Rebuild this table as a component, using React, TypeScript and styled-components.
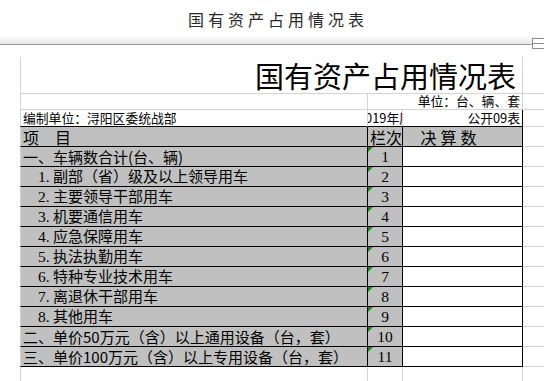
import React from 'react';
import styled, { createGlobalStyle } from 'styled-components';

const GRID = '#d4d4d4';
const INK = '#000';
const SHADE = '#c0c0c0';
const CJK = '"Noto Sans CJK SC", "Noto Sans", sans-serif';

const GlobalStyle = createGlobalStyle`
  html, body {
    margin: 0;
    padding: 0;
    background: #fff;
  }
  body {
    width: 544px;
    height: 381px;
    overflow: hidden;
    font-family: ${CJK};
    color: #000;
  }
`;

const Page = styled.div`
  width: 544px;
  height: 381px;
  overflow: hidden;
`;

const TopBar = styled.header`
  height: 36px;
  display: flex;
  align-items: center;
  justify-content: center;
  padding-left: 12px;
  padding-top: 2px;
  box-sizing: border-box;
`;

const DocTitle = styled.h1`
  margin: 0;
  font-size: 16px;
  font-weight: 400;
  line-height: 1;
  letter-spacing: 4px;
  color: #2a2a2a;
`;

const Divider = styled.div`
  position: relative;
  height: 8px;
  background: linear-gradient(#fcfcfc, #e6e6e6);
  border-bottom: 1px solid #9c9c9c;
`;

const SplitIcon = styled.span`
  position: absolute;
  right: -2px;
  top: 2px;
  width: 12px;
  height: 9px;
  border: 1px solid #8e8e8e;
  background: linear-gradient(#fff 0 4px, #8e8e8e 4px 5px, #fff 5px);
`;

const Sheet = styled.div`
  margin-top: 12px;
  padding-left: 20px;
`;

const Row = styled.div<{ $h: number }>`
  display: flex;
  height: ${(p) => p.$h}px;
`;

type Line = 'ink' | 'grid' | 'none';
const lineColor = (l: Line) => (l === 'ink' ? INK : l === 'grid' ? GRID : 'transparent');

const Cell = styled.div<{
  $w: number;
  $bg?: string;
  $right?: Line;
  $bottom?: Line;
  $left?: boolean;
  $clip?: boolean;
  $align?: 'left' | 'center' | 'right';
  $valign?: 'center' | 'flex-end';
}>`
  position: relative;
  box-sizing: border-box;
  flex: 0 0 ${(p) => p.$w}px;
  width: ${(p) => p.$w}px;
  height: 100%;
  overflow: ${(p) => (p.$clip ? 'hidden' : 'visible')};
  white-space: nowrap;
  display: flex;
  align-items: ${(p) => p.$valign || 'center'};
  justify-content: ${(p) =>
    p.$align === 'right' ? 'flex-end' : p.$align === 'center' ? 'center' : 'flex-start'};
  background: ${(p) => p.$bg || '#fff'};
  border-right: 1px solid ${(p) => lineColor(p.$right || 'none')};
  border-bottom: 1px solid ${(p) => lineColor(p.$bottom || 'none')};
  border-left: ${(p) => (p.$left ? `1px solid ${GRID}` : 'none')};
  line-height: 1;
`;

const Flag = styled.span`
  position: absolute;
  left: 0;
  top: 0;
  width: 0;
  height: 0;
  border-top: 5px solid #1a8a1a;
  border-right: 5px solid transparent;
`;

const BigTitle = styled.span`
  font-size: 29px;
  padding-right: 6px;
`;

const Small = styled.span<{ $pad?: number }>`
  font-size: 12.8px;
  padding-right: ${(p) => p.$pad ?? 0}px;
  padding-left: 2px;
  padding-bottom: 1px;
`;

const Clipped = styled.span`
  font-size: 12.8px;
  flex: 0 0 auto;
  padding-bottom: 1px;
`;

const Label = styled.span<{ $indent?: boolean }>`
  font-size: 15px;
  padding-left: ${(p) => (p.$indent ? 17 : 2)}px;
`;

const Prefix = styled.span`
  display: inline-block;
  width: 15px;
  font-family: "Liberation Serif", ${CJK};
  font-size: 15.5px;
`;

const HeadText = styled.span<{ $shift?: number; $spread?: number }>`
  font-size: 16px;
  padding-right: ${(p) => p.$shift ?? 0}px;
  padding-left: 2px;
  letter-spacing: ${(p) => p.$spread ?? 0}px;
`;

const Num = styled.span`
  font-family: "Liberation Serif", ${CJK};
  font-size: 15.5px;
`;

const W1 = 348;
const W2 = 35;
const W3 = 120;
const W4 = 40;

const items: { label: string; no?: string }[] = [
  { label: '一、车辆数合计(台、辆)' },
  { no: '1.', label: '副部（省）级及以上领导用车' },
  { no: '2.', label: '主要领导干部用车' },
  { no: '3.', label: '机要通信用车' },
  { no: '4.', label: '应急保障用车' },
  { no: '5.', label: '执法执勤用车' },
  { no: '6.', label: '特种专业技术用车' },
  { no: '7.', label: '离退休干部用车' },
  { no: '8.', label: '其他用车' },
  { label: '二、单价50万元（含）以上通用设备（台，套）' },
  { label: '三、单价100万元（含）以上专用设备（台，套）' },
];

export default function App() {
  return (
    <Page>
      <GlobalStyle />
      <TopBar>
        <DocTitle>国有资产占用情况表</DocTitle>
      </TopBar>
      <Divider>
        <SplitIcon />
      </Divider>
      <Sheet>
        <Row $h={37}>
          <Cell $w={W1 + W2 + W3} $left $right="grid" $bottom="grid" $align="right">
            <BigTitle>国有资产占用情况表</BigTitle>
          </Cell>
          <Cell $w={W4} $bottom="grid" />
        </Row>
        <Row $h={16}>
          <Cell $w={W1} $left $right="grid" $bottom="grid" />
          <Cell $w={W2 + W3} $right="grid" $bottom="grid" $align="right" $valign="flex-end">
            <Small $pad={2}>单位：台、辆、套</Small>
          </Cell>
          <Cell $w={W4} $bottom="grid" />
        </Row>
        <Row $h={17}>
          <Cell $w={W1} $left $right="grid" $bottom="ink" $valign="flex-end">
            <Small>编制单位：浔阳区委统战部</Small>
          </Cell>
          <Cell $w={W2} $clip $right="grid" $bottom="ink" $align="center" $valign="flex-end">
            <Clipped>2019年度</Clipped>
          </Cell>
          <Cell $w={W3} $right="ink" $bottom="ink" $align="right" $valign="flex-end">
            <Small $pad={2}>公开09表</Small>
          </Cell>
          <Cell $w={W4} $bottom="grid" />
        </Row>
        <Row $h={20}>
          <Cell $w={W1} $left $bg={SHADE} $right="ink" $bottom="ink">
            <HeadText>项　目</HeadText>
          </Cell>
          <Cell $w={W2} $bg={SHADE} $right="ink" $bottom="ink" $align="center">
            <HeadText>栏次</HeadText>
          </Cell>
          <Cell $w={W3} $bg={SHADE} $right="ink" $bottom="ink" $align="center">
            <HeadText $shift={26} $spread={4}>决算数</HeadText>
          </Cell>
          <Cell $w={W4} $bottom="grid" />
        </Row>
        {items.map((it, i) => (
          <Row $h={20} key={it.label}>
            <Cell $w={W1} $left $bg={SHADE} $right="ink" $bottom="ink">
              <Label $indent={!!it.no}>
                {it.no && <Prefix>{it.no}</Prefix>}
                {it.label}
              </Label>
            </Cell>
            <Cell $w={W2} $bg={SHADE} $right="ink" $bottom="ink" $align="center">
              <Flag />
              <Num>{i + 1}</Num>
            </Cell>
            <Cell $w={W3} $right="ink" $bottom="ink" />
            <Cell $w={W4} $bottom="grid" />
          </Row>
        ))}
        <Row $h={20}>
          <Cell $w={W1} $left $right="grid" $bottom="grid" />
          <Cell $w={W2} $right="grid" $bottom="grid" />
          <Cell $w={W3} $right="grid" $bottom="grid" />
          <Cell $w={W4} $bottom="grid" />
        </Row>
      </Sheet>
    </Page>
  );
}
